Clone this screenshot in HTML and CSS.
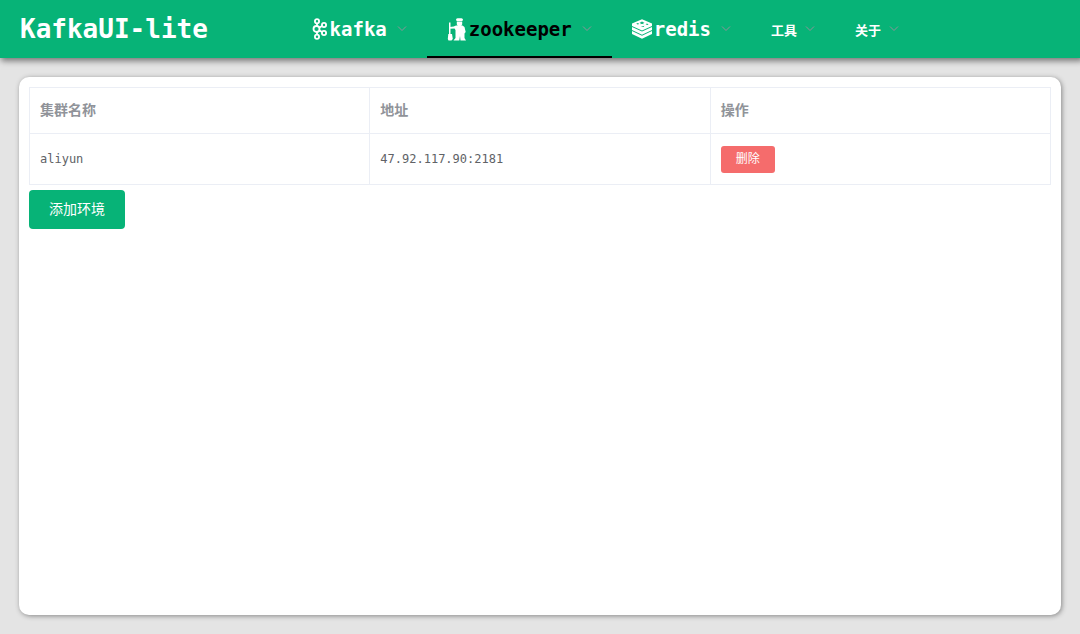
FILE: index.html
```html
<!DOCTYPE html>
<html lang="zh-CN">
<head>
  <meta charset="UTF-8">
  <meta name="viewport" content="width=device-width, initial-scale=1">
  <title>KafkaUI-lite</title>
  <link rel="stylesheet" href="styles.css">
</head>
<body>
<header class="header">
  <h1 class="brand">KafkaUI-lite</h1>
  <nav class="menu">
    <button type="button" class="menu-item">
      <svg class="logo logo-kafka" viewBox="0 0 16 22" fill="none" stroke="currentColor" stroke-width="1.8">
        <circle cx="5" cy="3.2" r="2.1"/>
        <circle cx="4.5" cy="11" r="3"/>
        <circle cx="5" cy="18.8" r="2.1"/>
        <circle cx="12" cy="7" r="2.1"/>
        <circle cx="12" cy="15" r="2.1"/>
        <path d="M5 5.3V8M5 14v2.7M7.2 9.6l2.9-1.6M7.2 12.4l2.9 1.6"/>
      </svg>
      <span>kafka</span>
      <svg class="arrow" viewBox="0 0 10 10"><path d="M1 2.5l4 4 4-4"/></svg>
    </button>
    <button type="button" class="menu-item active">
      <svg class="logo logo-wide" viewBox="0 0 20 24" fill="currentColor">
        <path d="M9 2l1.500-.8h4L16 2l-.5 2h-6zM9.800 4.500h5.400v2.800l-1 1.700h-3.400l-1-1.700z"/>
        <path d="M9 8.500h6.500l2 1.500 1.200 5-1.200 1.500V21l1.500 2.500h-5.500L13 19l-.7 4.500H6.500L8.500 21V13l-1-1.500-4.300.2-.5-1.700 4-.4z"/>
        <path d="M2 5.500h1.500V17H5l.8 5-1.300 1.500h-3L.8 22l.5-5H2z"/>
      </svg>
      <span>zookeeper</span>
      <svg class="arrow" viewBox="0 0 10 10"><path d="M1 2.5l4 4 4-4"/></svg>
    </button>
    <button type="button" class="menu-item">
      <svg class="logo logo-wide" viewBox="0 0 20 20" fill="currentColor">
        <path fill-rule="evenodd" d="M10 .3l10 4.200v2.500L10 11.600 0 7V4.500zM10 2.200l-.8 1-1.700.2 1.200.8-.2 1 1.500-.4 1.500.4-.2-1 1.200-.8-1.700-.2zM4.200 4.700l1.500.9 1.600-.7-1.400-.8zM8.700 7.800l2.800.2 1-1.300zM13.600 5.300l1.700.8 1.300-.7-1.600-.8z"/>
        <path d="M0 8l10 4.600L20 8v3l-10 4.700L0 11z"/>
        <path d="M0 12l10 4.700L20 12v3l-10 4.800L0 15z"/>
      </svg>
      <span>redis</span>
      <svg class="arrow" viewBox="0 0 10 10"><path d="M1 2.5l4 4 4-4"/></svg>
    </button>
    <button type="button" class="menu-item small">
      <span>工具</span>
      <svg class="arrow" viewBox="0 0 10 10"><path d="M1 2.5l4 4 4-4"/></svg>
    </button>
    <button type="button" class="menu-item small">
      <span>关于</span>
      <svg class="arrow" viewBox="0 0 10 10"><path d="M1 2.5l4 4 4-4"/></svg>
    </button>
  </nav>
</header>

<main class="card">
  <table class="clusters">
    <thead>
      <tr>
        <th>集群名称</th>
        <th>地址</th>
        <th>操作</th>
      </tr>
    </thead>
    <tbody>
      <tr>
        <td>aliyun</td>
        <td>47.92.117.90:2181</td>
        <td><button type="button" class="btn btn-danger">删除</button></td>
      </tr>
    </tbody>
  </table>
  <button type="button" class="btn btn-primary">添加环境</button>
</main>
</body>
</html>
```
FILE: styles.css
```css
* {
  box-sizing: border-box;
}

body {
  display: flex;
  flex-direction: column;
  min-height: 100vh;
  margin: 0;
  background: #e4e4e4;
  color: #606266;
  font-family: "DejaVu Sans Mono", "Noto Sans CJK SC", monospace;
  font-size: 12px;
}

button {
  border: 0;
  font-family: inherit;
  cursor: pointer;
}

.header {
  display: flex;
  height: 58px;
  background: #07b377;
  box-shadow: 2px 2px 6px 1px #777;
}

.brand {
  flex: 0 0 27%;
  margin: 0;
  padding-left: 20px;
  color: #fff;
  font-size: 26px;
  line-height: 58px;
}

.menu {
  display: flex;
}

.menu-item {
  display: flex;
  align-items: center;
  padding: 2px 20px 0;
  border-bottom: 2px solid transparent;
  background: none;
  color: #fff;
  font-size: 19px;
  font-weight: bold;
}

.menu-item.active {
  border-bottom-color: #000;
  color: #000;
}

.menu-item.small {
  font-size: 13px;
}

.logo {
  flex: none;
  color: #fff;
}

.logo-kafka {
  width: 16px;
  height: 22px;
  margin-right: 2px;
}

.logo-wide {
  width: 20px;
  height: 24px;
  margin-right: 2px;
}

.arrow {
  width: 10px;
  height: 10px;
  margin-left: 10px;
  fill: none;
  stroke: #909399;
}

.small .arrow {
  margin-left: 8px;
}

.card {
  flex: 1;
  margin: 19px;
  padding: 10px;
  border-radius: 10px;
  background: #fff;
  box-shadow: 1px 1px 5px #888;
}

.clusters {
  width: 100%;
  margin-bottom: 5px;
  border-collapse: collapse;
  table-layout: fixed;
}

.clusters th,
.clusters td {
  padding: 11px 10px;
  border: 1px solid #ebeef5;
  line-height: 23px;
  text-align: left;
}

.clusters th {
  color: #909399;
  font-size: 14px;
}

.clusters td {
  height: 51px;
}

.btn {
  display: block;
  border-radius: 4px;
  color: #fff;
}

.btn-primary {
  padding: 12px 20px;
  background: #07b377;
  font-size: 14px;
  line-height: 15px;
}

.btn-danger {
  padding: 7px 15px;
  border-radius: 3px;
  background: #f56c6c;
  font-size: 12px;
  line-height: 13px;
}
```
